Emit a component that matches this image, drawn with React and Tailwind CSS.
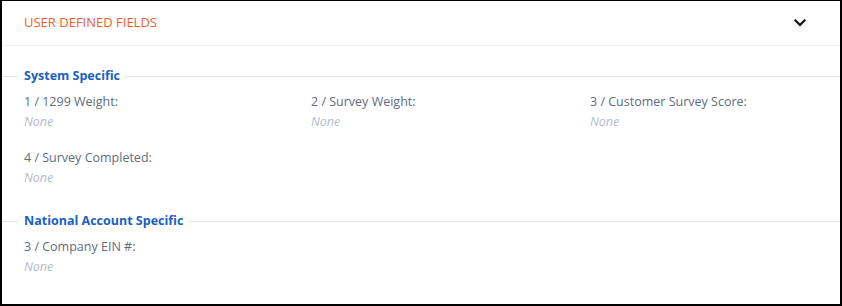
import React from 'react'

const SECTIONS = [
  {
    title: 'System Specific',
    fields: [
      { label: '1 / 1299 Weight:', value: null },
      { label: '2 / Survey Weight:', value: null },
      { label: '3 / Customer Survey Score:', value: null },
      { label: '4 / Survey Completed:', value: null }
    ]
  },
  {
    title: 'National Account Specific',
    fields: [{ label: '3 / Company EIN #:', value: null }]
  }
]

function Chevron() {
  return (
    <svg width="12" height="8" viewBox="0 0 12 8" fill="none">
      <path d="M1.5 1.5 L6 6 L10.5 1.5" stroke="#111" strokeWidth="2.2" strokeLinecap="square" />
    </svg>
  )
}

function SectionTitle({ title }) {
  return (
    <div className="flex items-center h-[20px]">
      <div className="w-[16px] h-px bg-[#dfe4ee]" />
      <div className="pl-[6px] pr-[5px] text-[12.5px] font-bold text-[#1b5fc1] leading-[20px]">{title}</div>
      <div className="flex-1 h-px bg-[#dfe4ee]" />
    </div>
  )
}

function Field({ label, value }) {
  return (
    <div className="h-[56px]">
      <div className="text-[12.5px] text-[#5f6b7d] leading-[20px]">{label}</div>
      <div className="text-[12.5px] italic text-[#b4bcc8] leading-[20px]">{value ?? 'None'}</div>
    </div>
  )
}

export default function App() {
  return (
    <div
      className="w-[842px] h-[306px] bg-white border-l-2 border-r-2 border-t border-b-2 border-black overflow-hidden"
      style={{ fontFamily: '"Open Sans", sans-serif' }}
    >
      {/* Header */}
      <div className="flex items-center justify-between h-[45px] pl-[22px] pr-[34px] border-b border-[#eef0f4]">
        <div className="text-[13px] font-medium text-[#f0602a] uppercase">User Defined Fields</div>
        <Chevron />
      </div>

      <div className="pt-[20px]">
        {SECTIONS.map((s, i) => (
          <div key={s.title} className={i > 0 ? 'mt-[7px]' : ''}>
            <SectionTitle title={s.title} />
            <div className="grid grid-cols-[287px_279px_1fr] pl-[22px] pt-[6px]">
              {s.fields.map((f) => (
                <Field key={f.label} {...f} />
              ))}
            </div>
          </div>
        ))}
      </div>
    </div>
  )
}
